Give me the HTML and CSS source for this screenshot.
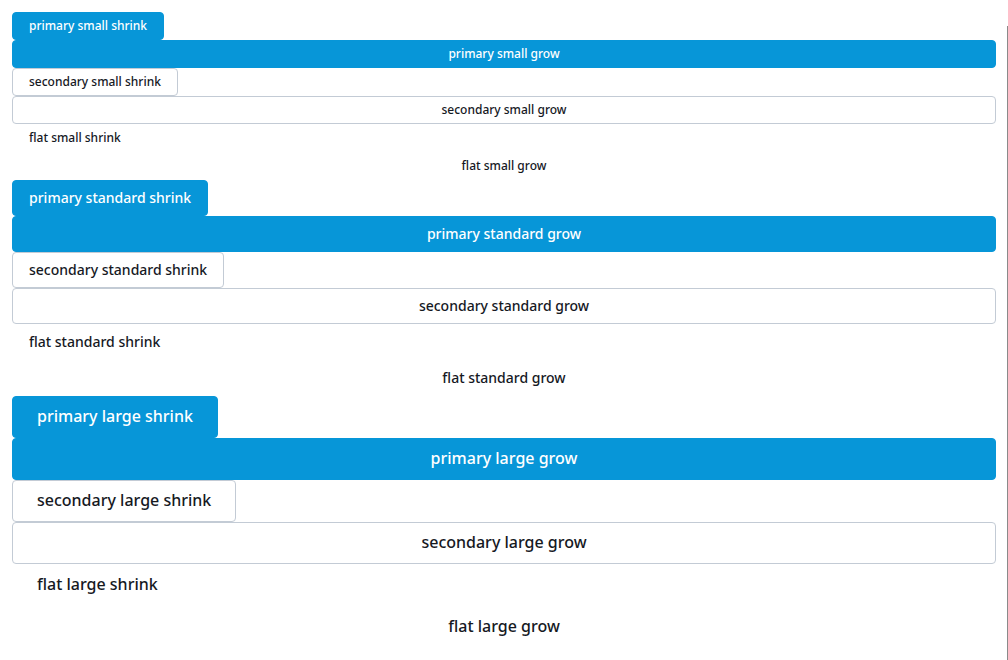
FILE: index.html
```html
<!DOCTYPE html>
<html>
<head>
<meta charset="utf-8">
<link rel="stylesheet" href="styles.css">
</head>
<body>
<div class="page">
  <div class="stack">
    <button class="btn primary small shrink">primary small shrink</button>
    <button class="btn primary small grow">primary small grow</button>
    <button class="btn secondary small shrink">secondary small shrink</button>
    <button class="btn secondary small grow">secondary small grow</button>
    <button class="btn flat small shrink">flat small shrink</button>
    <button class="btn flat small grow">flat small grow</button>

    <button class="btn primary standard shrink">primary standard shrink</button>
    <button class="btn primary standard grow">primary standard grow</button>
    <button class="btn secondary standard shrink">secondary standard shrink</button>
    <button class="btn secondary standard grow">secondary standard grow</button>
    <button class="btn flat standard shrink">flat standard shrink</button>
    <button class="btn flat standard grow">flat standard grow</button>

    <button class="btn primary large shrink">primary large shrink</button>
    <button class="btn primary large grow">primary large grow</button>
    <button class="btn secondary large shrink">secondary large shrink</button>
    <button class="btn secondary large grow">secondary large grow</button>
    <button class="btn flat large shrink">flat large shrink</button>
    <button class="btn flat large grow">flat large grow</button>
  </div>
  <div class="edge"></div>
</div>
</body>
</html>
```
FILE: styles.css
```css
html, body {
  margin: 0;
  padding: 0;
  background: #ffffff;
}
.page {
  position: relative;
  padding: 12px;
  font-family: "Noto Sans", "Open Sans", sans-serif;
}
.stack {
  display: flex;
  flex-direction: column;
  align-items: flex-start;
}
.edge {
  position: absolute;
  left: 1007px;
  top: 26px;
  width: 1px;
  height: 640px;
  background: #8a8a8a;
}
.btn {
  box-sizing: border-box;
  display: flex;
  align-items: center;
  justify-content: center;
  margin: 0;
  border: 1px solid transparent;
  border-radius: 4px;
  font-family: "Noto Sans", "Open Sans", sans-serif;
  font-weight: 500;
  color: #16191f;
  background: transparent;
  white-space: nowrap;
  cursor: pointer;
  padding-top: 0;
  padding-bottom: 2px;
}
.grow {
  align-self: stretch;
}
.primary {
  background: #0796d8;
  border-color: #0796d8;
  color: #ffffff;
}
.secondary {
  background: #ffffff;
  border-color: #c3cbd5;
}
.small {
  height: 28px;
  padding-left: 16px;
  padding-right: 16px;
  font-size: 12px;
}
.standard {
  height: 36px;
  padding-left: 16px;
  padding-right: 16px;
  font-size: 14px;
}
.large {
  height: 42px;
  padding-left: 24px;
  padding-right: 24px;
  font-size: 16px;
}
```
